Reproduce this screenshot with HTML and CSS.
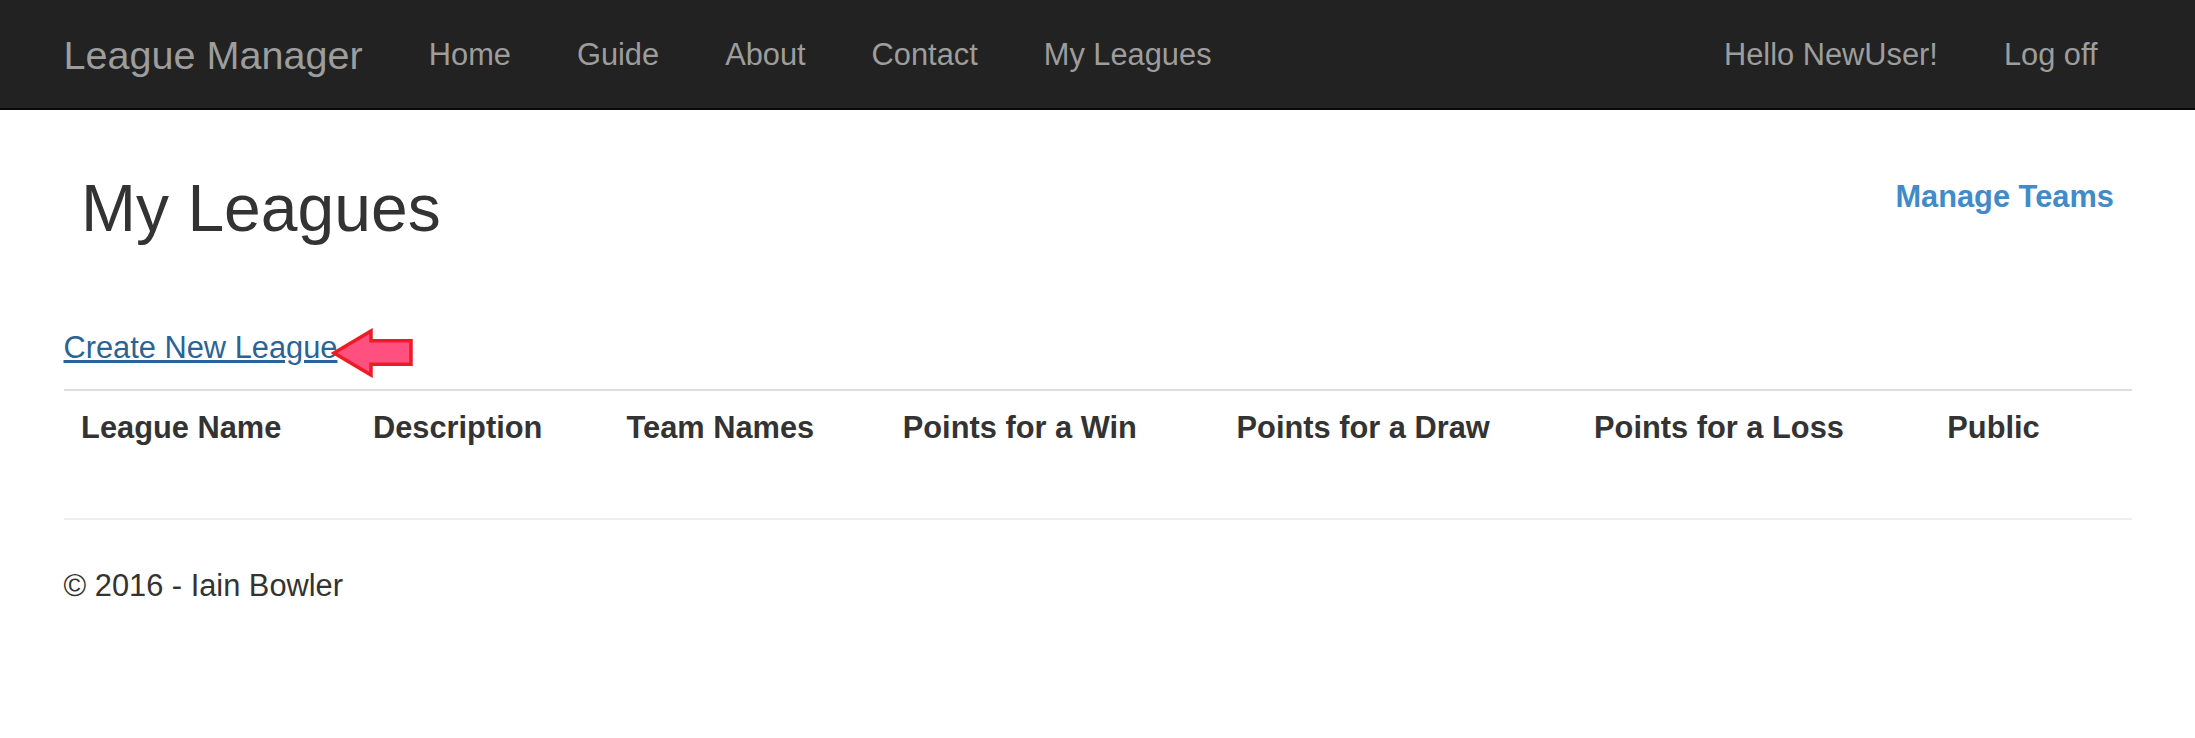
FILE: index.html
```html
<!DOCTYPE html>
<html>
<head>
<meta charset="utf-8">
<title>My Leagues - League Manager</title>
<link rel="stylesheet" href="styles.css">
</head>
<body>
<nav class="navbar">
  <div class="container nav-inner">
    <a class="brand" href="#">League Manager</a>
    <ul class="nav">
      <li><a href="#">Home</a></li>
      <li><a href="#">Guide</a></li>
      <li><a href="#">About</a></li>
      <li><a href="#">Contact</a></li>
      <li><a href="#">My Leagues</a></li>
    </ul>
    <ul class="nav nav-right">
      <li><a href="#">Hello NewUser!</a></li>
      <li><a href="#">Log off</a></li>
    </ul>
  </div>
</nav>
<div class="container body-content">
  <div class="page-head">
    <h2>My Leagues</h2>
    <a class="manage" href="#">Manage Teams</a>
  </div>
  <p class="create">
    <a href="#">Create New League</a>
    <svg class="arrow" width="84" height="50" viewBox="0 0 84 50">
      <polygon points="3,25 40,3 40,12.7 80,12.7 80,36.3 40,36.3 40,47" fill="#ff5080" stroke="#ed1c24" stroke-width="3.5" stroke-linejoin="miter"/>
    </svg>
  </p>
  <table class="table">
    <tr>
      <th>League Name</th>
      <th>Description</th>
      <th>Team Names</th>
      <th>Points for a Win</th>
      <th>Points for a Draw</th>
      <th>Points for a Loss</th>
      <th>Public</th>
      <th></th>
    </tr>
  </table>
  <hr>
  <footer>
    <p>© 2016 - Iain Bowler</p>
  </footer>
</div>
</body>
</html>
```
FILE: styles.css
```css
* { box-sizing: border-box; }
html, body { margin: 0; padding: 0; }
body {
  font-family: "Liberation Sans", Arial, Helvetica, sans-serif;
  font-size: 30.8px;
  line-height: 44px;
  color: #333;
  background: #fff;
}
a { text-decoration: none; }
.container {
  width: 2134px;
  margin: 0 auto;
  padding: 0 33px;
}
.navbar {
  background: #222;
  border-bottom: 2px solid #080808;
  height: 110px;
}
.nav-inner {
  display: flex;
  align-items: flex-start;
  height: 108px;
}
.brand {
  display: block;
  margin-left: -33px;
  padding: 33px;
  font-size: 39.6px;
  line-height: 44px;
  height: 108px;
  color: #9d9d9d;
}
.nav {
  display: flex;
  list-style: none;
  margin: 0;
  padding: 0;
}
.nav a {
  display: block;
  padding: 33px;
  line-height: 44px;
  color: #9d9d9d;
}
.nav-right { margin-left: auto; margin-right: 1px; }
.page-head {
  display: flex;
  justify-content: space-between;
  align-items: center;
  padding: 17.6px;
  margin-bottom: 42.5px;
}
.page-head h2 {
  margin: 44px 0 22px;
  font-size: 66px;
  font-weight: 400;
  line-height: 1.1;
  color: #333;
}
.manage {
  color: #428bca;
  font-weight: 700;
}
.create {
  position: relative;
  margin: 0 0 19px;
}
.create a {
  color: #2a6496;
  text-decoration: underline;
}
.arrow {
  position: absolute;
  left: 267px;
  top: 1.7px;
}
.table {
  width: 100%;
  border-collapse: collapse;
  border-spacing: 0;
  margin-bottom: 44px;
}
.table th {
  text-align: left;
  vertical-align: bottom;
  padding: 15.1px 17.6px 20.1px;
  line-height: 44px;
  font-weight: 700;
  border-top: 2.2px solid #ddd;
}
hr {
  border: 0;
  border-top: 2.2px solid #eee;
  margin: 48px 0 44px;
  height: 0;
}
footer p { margin: 0 0 22px; }
```
